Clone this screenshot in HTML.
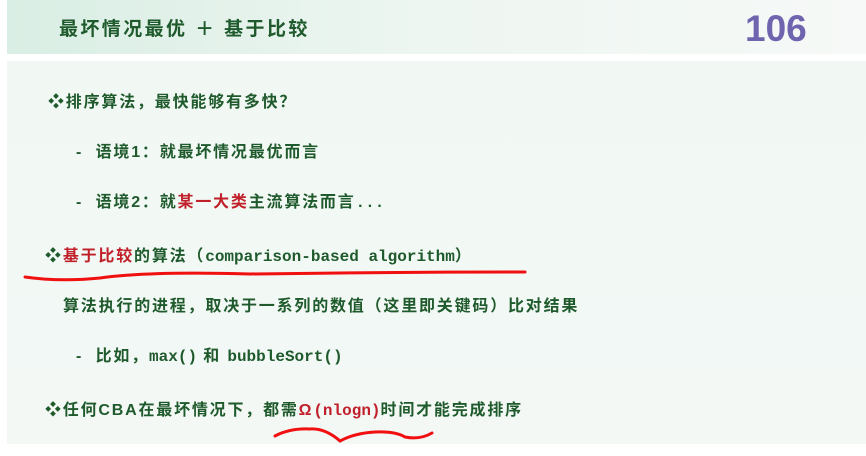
<!DOCTYPE html><html><head><meta charset="utf-8"><style>
body{margin:0;width:866px;height:456px;background:#fff;position:relative;overflow:hidden;font-family:"Liberation Sans","Noto Sans CJK SC",sans-serif;font-weight:bold;color:#1f5a2c}
.hdr{position:absolute;left:7px;top:0;width:859px;height:54px;background:linear-gradient(90deg,#d9eee4,#eef6f1 50%,#f6f9f7)}
.bd{position:absolute;left:7px;top:61px;width:859px;height:383px;background:linear-gradient(180deg,#f1f8f4,#f3f8f5)}
.t{position:absolute;white-space:nowrap;font-size:16px;line-height:20px;letter-spacing:1.8px}
.m{font-family:"Liberation Mono","DejaVu Sans Mono",monospace;font-size:16px;letter-spacing:0}
.r{color:#c0202a}
</style></head><body>
<div class="hdr"></div><div class="bd"></div>
<div class="t" style="left:59px;top:18px;font-size:19px;line-height:24px;letter-spacing:2.4px">最坏情况最优 ＋ 基于比较</div>
<div class="t" style="left:745px;top:10px;font-size:37px;line-height:38px;letter-spacing:0;color:#6f64ae;font-family:'Liberation Sans',sans-serif">106</div>
<div class="t" style="left:48px;top:93px">❖排序算法，最快能够有多快？</div>
<div class="t" style="left:76px;top:143px">-&nbsp; 语境1：就最坏情况最优而言</div>
<div class="t" style="left:76px;top:193px">-&nbsp; 语境2：就<span class="r">某一大类</span>主流算法而言<span class="m">...</span></div>
<div class="t" style="left:45px;top:247px">❖<span class="r">基于比较</span>的算法（<span class="m">comparison-based algorithm</span>）</div>
<div class="t" style="left:63px;top:297px">算法执行的进程，取决于一系列的数值（这里即关键码）比对结果</div>
<div class="t" style="left:76px;top:347px">-&nbsp; 比如，<span class="m">max()</span> 和 <span class="m">bubbleSort()</span></div>
<div class="t" style="left:45px;top:401px">❖任何CBA在最坏情况下，都需<span class="r">Ω<span class="m">(nlogn)</span></span>时间才能完成排序</div>
<svg width="866" height="456" style="position:absolute;left:0;top:0">
<path d="M25 277 Q60 282 100 278 Q150 271 250 274 Q400 272 525 272" stroke="#f01010" stroke-width="3" fill="none" stroke-linecap="round"/>
<path d="M275 436 Q290 428 310 429 Q325 428 340 441 Q355 433 375 432 Q395 431 405 437 Q420 440 432 433" stroke="#f01010" stroke-width="3" fill="none" stroke-linecap="round"/>
</svg>
</body></html>
